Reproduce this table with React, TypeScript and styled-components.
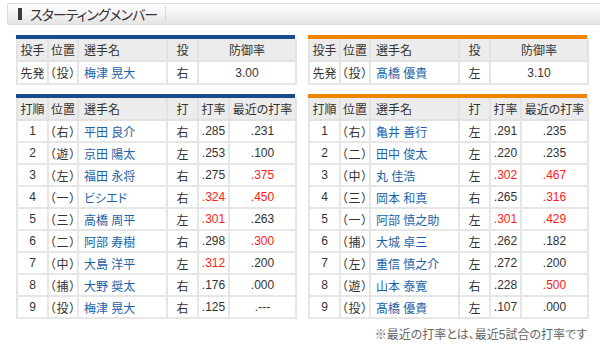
import React from 'react';
import styled, { createGlobalStyle } from 'styled-components';

const GlobalStyle = createGlobalStyle`
  body {
    margin: 0;
    background: #fff;
    font-family: "Liberation Sans", "Noto Sans CJK JP", sans-serif;
    font-feature-settings: "palt";
    color: #333;
  }
`;

const BLUE = '#184b8e';
const ORANGE = '#f08300';

type Row = [string, string, string, string, string, string];

const dragons = {
  pitcher: ['先発', '（投）', '梅津 晃大', '右', '3.00'],
  lineup: [
    ['1', '（右）', '平田 良介', '右', '.285', '.231'],
    ['2', '（遊）', '京田 陽太', '左', '.253', '.100'],
    ['3', '（左）', '福田 永将', '右', '.275', '!.375'],
    ['4', '（一）', 'ビシエド', '右', '!.324', '!.450'],
    ['5', '（三）', '高橋 周平', '左', '!.301', '.263'],
    ['6', '（二）', '阿部 寿樹', '右', '.298', '!.300'],
    ['7', '（中）', '大島 洋平', '左', '!.312', '.200'],
    ['8', '（捕）', '大野 奨太', '右', '.176', '.000'],
    ['9', '（投）', '梅津 晃大', '右', '.125', '.---'],
  ] as Row[],
};

const giants = {
  pitcher: ['先発', '（投）', '髙橋 優貴', '左', '3.10'],
  lineup: [
    ['1', '（右）', '亀井 善行', '左', '.291', '.235'],
    ['2', '（二）', '田中 俊太', '左', '.220', '.235'],
    ['3', '（中）', '丸 佳浩', '左', '!.302', '!.467'],
    ['4', '（三）', '岡本 和真', '右', '.265', '!.316'],
    ['5', '（一）', '阿部 慎之助', '左', '!.301', '!.429'],
    ['6', '（捕）', '大城 卓三', '左', '.262', '.182'],
    ['7', '（左）', '重信 慎之介', '左', '.272', '.200'],
    ['8', '（遊）', '山本 泰寛', '右', '.228', '!.500'],
    ['9', '（投）', '髙橋 優貴', '左', '.107', '.000'],
  ] as Row[],
};

const Page = styled.div`
  width: 600px;
  padding-top: 3px;
`;

const TitleBar = styled.div`
  margin-left: 7px;
  width: 587px;
  height: 20px;
  border: 1px solid #dcdcdc;
  border-radius: 2px;
  background: linear-gradient(#ffffff, #f4f4f4 45%, #e4e4e4);
  display: flex;
  align-items: center;
  padding-left: 10px;
`;

const TitleMark = styled.span`
  width: 4px;
  height: 12px;
  background: #3a3a3a;
  margin-right: 8px;
`;

const TitleText = styled.span`
  font-family: "Noto Sans CJK JP", sans-serif;
  font-size: 14px;
  color: #3a3038;
  letter-spacing: -1px;
`;

const TitleSep = styled.span`
  height: 14px;
  margin-left: 8px;
  border-left: 1px dotted #c4c4c4;
`;

const Grid = styled.div`
  display: grid;
  grid-template-columns: 279px 279px;
  column-gap: 13px;
  padding-left: 16px;
`;

const Block = styled.div<{ $mt: number }>`
  margin-top: ${({ $mt }) => $mt}px;
`;

const TableBox = styled.div<{ $color: string }>`
  border-top: 4px solid ${({ $color }) => $color};
`;

const Table = styled.table`
  width: 279px;
  table-layout: fixed;
  border-collapse: collapse;
  font-size: 12px;
  color: #333;
`;

const HeadCell = styled.th<{ $left?: boolean }>`
  height: 21px;
  padding: 0 ${({ $left }) => ($left ? '5px' : '0')};
  background: #ececec;
  border: 2px solid #e2e2e2;
  border-top: 0;
  font-weight: normal;
  text-align: ${({ $left }) => ($left ? 'left' : 'center')};
  white-space: nowrap;
`;

const Cell = styled.td<{ $hot?: boolean; $pitch?: boolean }>`
  height: ${({ $pitch }) => ($pitch ? 21 : 20)}px;
  padding: 0;
  border: 2px solid #e6e6e6;
  text-align: center;
  white-space: nowrap;
  color: ${({ $hot }) => ($hot ? '#ff1a1a' : '#333')};
`;

const PosCell = styled(Cell)`
  letter-spacing: 1px;
`;

const NameCell = styled(Cell)`
  text-align: left;
  padding-left: 5px;
  color: #1b62a8;
`;

const Note = styled.div`
  width: 587px;
  margin-top: 6px;
  text-align: right;
  font-size: 12px;
  color: #666;
`;

const Cols = ({ pitcher }: { pitcher?: boolean }) => (
  <colgroup>
    <col style={{ width: 31 }} />
    <col style={{ width: 30 }} />
    <col style={{ width: 89 }} />
    <col style={{ width: 31 }} />
    <col style={{ width: pitcher ? 98 : 31 }} />
    {!pitcher && <col style={{ width: 67 }} />}
  </colgroup>
);

const Stat = ({ v }: { v: string }) => {
  const hot = v.startsWith('!');
  return <Cell $hot={hot}>{hot ? v.slice(1) : v}</Cell>;
};

const PitcherTable = ({ color, p }: { color: string; p: string[] }) => (
  <TableBox $color={color}>
    <Table>
      <Cols pitcher />
      <thead>
        <tr>
          <HeadCell>投手</HeadCell>
          <HeadCell>位置</HeadCell>
          <HeadCell $left>選手名</HeadCell>
          <HeadCell>投</HeadCell>
          <HeadCell>防御率</HeadCell>
        </tr>
      </thead>
      <tbody>
        <tr>
          <Cell $pitch>{p[0]}</Cell>
          <PosCell $pitch>{p[1]}</PosCell>
          <NameCell $pitch>{p[2]}</NameCell>
          <Cell $pitch>{p[3]}</Cell>
          <Cell $pitch>{p[4]}</Cell>
        </tr>
      </tbody>
    </Table>
  </TableBox>
);

const LineupTable = ({ color, rows }: { color: string; rows: Row[] }) => (
  <TableBox $color={color}>
    <Table>
      <Cols />
      <thead>
        <tr>
          <HeadCell>打順</HeadCell>
          <HeadCell>位置</HeadCell>
          <HeadCell $left>選手名</HeadCell>
          <HeadCell>打</HeadCell>
          <HeadCell>打率</HeadCell>
          <HeadCell>最近の打率</HeadCell>
        </tr>
      </thead>
      <tbody>
        {rows.map((r) => (
          <tr key={r[0]}>
            <Cell>{r[0]}</Cell>
            <PosCell>{r[1]}</PosCell>
            <NameCell>{r[2]}</NameCell>
            <Cell>{r[3]}</Cell>
            <Stat v={r[4]} />
            <Stat v={r[5]} />
          </tr>
        ))}
      </tbody>
    </Table>
  </TableBox>
);

export default function App() {
  return (
    <Page>
      <GlobalStyle />
      <TitleBar>
        <TitleMark />
        <TitleText>スターティングメンバー</TitleText>
        <TitleSep />
      </TitleBar>
      <Block $mt={10}>
        <Grid>
          <PitcherTable color={BLUE} p={dragons.pitcher} />
          <PitcherTable color={ORANGE} p={giants.pitcher} />
        </Grid>
      </Block>
      <Block $mt={9}>
        <Grid>
          <LineupTable color={BLUE} rows={dragons.lineup} />
          <LineupTable color={ORANGE} rows={giants.lineup} />
        </Grid>
      </Block>
      <Note>※最近の打率とは、最近5試合の打率です</Note>
    </Page>
  );
}
